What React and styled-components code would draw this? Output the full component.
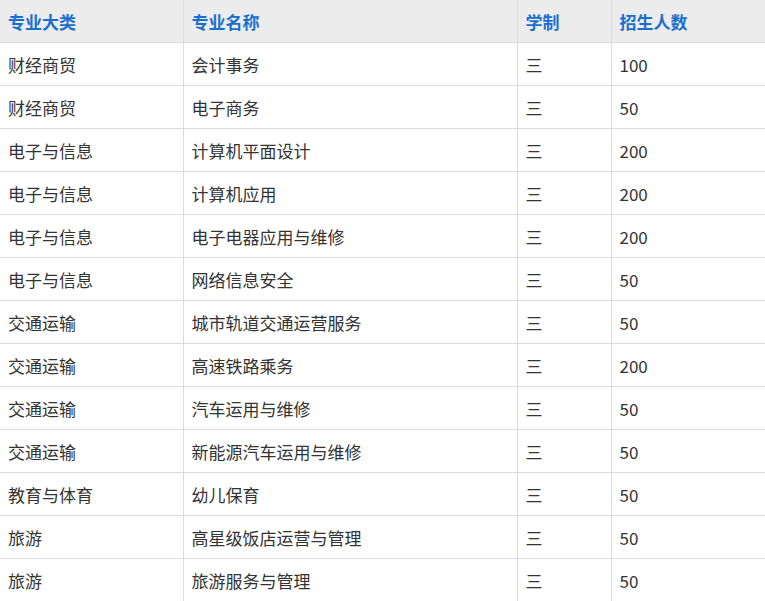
import React from 'react';
import styled, { createGlobalStyle } from 'styled-components';

const Global = createGlobalStyle`
  body { margin: 0; background: #fff; font-family: "Noto Sans CJK SC", "Liberation Sans", sans-serif; }
`;

const Table = styled.table`
  width: 765px;
  border-collapse: collapse;
  table-layout: fixed;
  font-size: 17px;
  color: #333;
`;

const Th = styled.th`
  height: 42px;
  padding: 0 0 0 8px;
  text-align: left;
  background: #ececec;
  color: #1a6fce;
  font-weight: bold;
  border: 1px solid #dcdcdc;
  border-top: none;
  &:first-child { border-left: none; }
  &:last-child { border-right: none; }
`;

const Td = styled.td`
  height: 42px;
  padding: 0 0 0 8px;
  border: 1px solid #dcdcdc;
  &:first-child { border-left: none; }
  &:last-child { border-right: none; }
`;

const rows = [
  ['财经商贸', '会计事务', '三', '100'],
  ['财经商贸', '电子商务', '三', '50'],
  ['电子与信息', '计算机平面设计', '三', '200'],
  ['电子与信息', '计算机应用', '三', '200'],
  ['电子与信息', '电子电器应用与维修', '三', '200'],
  ['电子与信息', '网络信息安全', '三', '50'],
  ['交通运输', '城市轨道交通运营服务', '三', '50'],
  ['交通运输', '高速铁路乘务', '三', '200'],
  ['交通运输', '汽车运用与维修', '三', '50'],
  ['交通运输', '新能源汽车运用与维修', '三', '50'],
  ['教育与体育', '幼儿保育', '三', '50'],
  ['旅游', '高星级饭店运营与管理', '三', '50'],
  ['旅游', '旅游服务与管理', '三', '50'],
];

export default function App() {
  return (
    <>
      <Global />
      <Table>
        <colgroup>
          <col style={{ width: 183 }} />
          <col style={{ width: 334 }} />
          <col style={{ width: 94 }} />
          <col />
        </colgroup>
        <thead>
          <tr>
            <Th>专业大类</Th>
            <Th>专业名称</Th>
            <Th>学制</Th>
            <Th>招生人数</Th>
          </tr>
        </thead>
        <tbody>
          {rows.map((r, i) => (
            <tr key={i}>
              {r.map((c, j) => <Td key={j}>{c}</Td>)}
            </tr>
          ))}
        </tbody>
      </Table>
    </>
  );
}
